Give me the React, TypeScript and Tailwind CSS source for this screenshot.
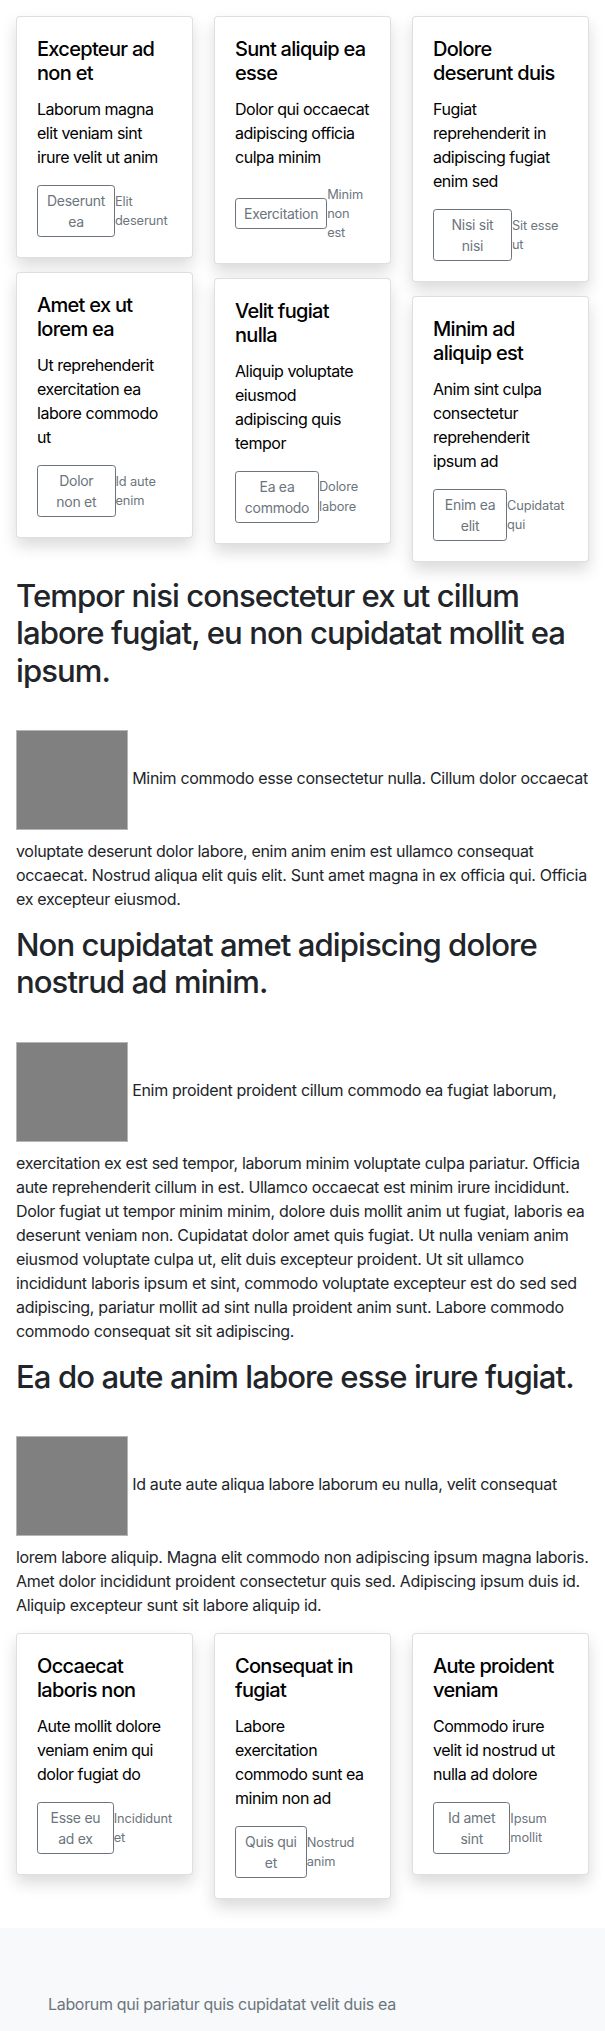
import React from "react";

type CardData = {
  title: string;
  text: string;
  btn: string;
  small: string;
};

function Card({ c }: { c: CardData }) {
  return (
    <div className="rounded-[4px] border border-black/[0.125] bg-white shadow-[0_8px_16px_rgba(0,0,0,0.15)]">
      <div className="p-5">
        <h5 className="mb-3 text-[20px] font-medium leading-[24px] tracking-[-0.035em] text-black">{c.title}</h5>
        <p className="mb-4 text-[16px] leading-[24px] tracking-[-0.03em] text-black">{c.text}</p>
        <div className="flex items-center justify-between">
          <button className="rounded-[3.2px] border border-[#6c757d] bg-transparent px-2 py-1 text-[14px] leading-[21px] tracking-[-0.02em] text-[#6c757d]">
            {c.btn}
          </button>
          <small className="text-[12.8px] leading-[19.2px] tracking-[-0.01em] text-[#6c757d]">{c.small}</small>
        </div>
      </div>
    </div>
  );
}

const col1: CardData[] = [
  { title: "Excepteur ad non et", text: "Laborum magna elit veniam sint irure velit ut anim", btn: "Deserunt ea", small: "Elit deserunt" },
  { title: "Amet ex ut lorem ea", text: "Ut reprehenderit exercitation ea labore commodo ut", btn: "Dolor non et", small: "Id aute enim" },
];
const col2: CardData[] = [
  { title: "Sunt aliquip ea esse", text: "Dolor qui occaecat adipiscing officia culpa minim", btn: "Exercitation", small: "Minim non est" },
  { title: "Velit fugiat nulla", text: "Aliquip voluptate eiusmod adipiscing quis tempor", btn: "Ea ea commodo", small: "Dolore labore" },
];
const col3: CardData[] = [
  { title: "Dolore deserunt duis", text: "Fugiat reprehenderit in adipiscing fugiat enim sed", btn: "Nisi sit nisi", small: "Sit esse ut" },
  { title: "Minim ad aliquip est", text: "Anim sint culpa consectetur reprehenderit ipsum ad", btn: "Enim ea elit", small: "Cupidatat qui" },
];
const bottom: CardData[] = [
  { title: "Occaecat laboris non", text: "Aute mollit dolore veniam enim qui dolor fugiat do", btn: "Esse eu ad ex", small: "Incididunt et" },
  { title: "Consequat in fugiat", text: "Labore exercitation commodo sunt ea minim non ad", btn: "Quis qui et", small: "Nostrud anim" },
  { title: "Aute proident veniam", text: "Commodo irure velit id nostrud ut nulla ad dolore", btn: "Id amet sint", small: "Ipsum mollit" },
];

function Article({ title, text }: { title: string; text: string }) {
  return (
    <div>
      <h1 className="mb-2 text-[31.1px] font-medium leading-[1.2] tracking-[-0.03em] text-[#212529]">{title}</h1>
      <p className="mb-4 pt-[23px] text-[16px] leading-[24px] tracking-[-0.02em] text-[#212529]">
        <span className="my-[9px] inline-block h-[100px] w-[112px] border border-[#b5b5b5] bg-[#808080] align-middle"></span>{" "}
        {text}
      </p>
    </div>
  );
}

export default function App() {
  return (
    <div className="min-h-[2031px] bg-white font-['Inter','Noto_Sans',sans-serif] text-[#212529]">
      <div className="px-4 pt-4">
        <div className="grid grid-cols-3 items-start gap-x-[21px]">
          {[col1, col2, col3].map((col, i) => (
            <div key={i} className="flex flex-col gap-[14px]">
              {col.map((c) => (
                <Card key={c.title} c={c} />
              ))}
            </div>
          ))}
        </div>

        <div className="mt-4">
          <Article
            title="Tempor nisi consectetur ex ut cillum labore fugiat, eu non cupidatat mollit ea ipsum."
            text="Minim commodo esse consectetur nulla. Cillum dolor occaecat voluptate deserunt dolor labore, enim anim enim est ullamco consequat occaecat. Nostrud aliqua elit quis elit. Sunt amet magna in ex officia qui. Officia ex excepteur eiusmod."
          />
          <Article
            title="Non cupidatat amet adipiscing dolore nostrud ad minim."
            text="Enim proident proident cillum commodo ea fugiat laborum, exercitation ex est sed tempor, laborum minim voluptate culpa pariatur. Officia aute reprehenderit cillum in est. Ullamco occaecat est minim irure incididunt. Dolor fugiat ut tempor minim minim, dolore duis mollit anim ut fugiat, laboris ea deserunt veniam non. Cupidatat dolor amet quis fugiat. Ut nulla veniam anim eiusmod voluptate culpa ut, elit duis excepteur proident. Ut sit ullamco incididunt laboris ipsum et sint, commodo voluptate excepteur est do sed sed adipiscing, pariatur mollit ad sint nulla proident anim sunt. Labore commodo commodo consequat sit sit adipiscing."
          />
          <Article
            title="Ea do aute anim labore esse irure fugiat."
            text="Id aute aute aliqua labore laborum eu nulla, velit consequat lorem labore aliquip. Magna elit commodo non adipiscing ipsum magna laboris. Amet dolor incididunt proident consectetur quis sed. Adipiscing ipsum duis id. Aliquip excepteur sunt sit labore aliquip id."
          />
        </div>

        <div className="grid grid-cols-3 items-start gap-x-[21px]">
          {bottom.map((c) => (
            <Card key={c.title} c={c} />
          ))}
        </div>
      </div>

      <footer className="mt-[29px] bg-[#f8f9fa] px-12 pb-4 pt-16">
        <p className="text-[16px] leading-[24px] tracking-[-0.02em] text-[#6c757d]">Laborum qui pariatur quis cupidatat velit duis ea</p>
      </footer>
    </div>
  );
}
